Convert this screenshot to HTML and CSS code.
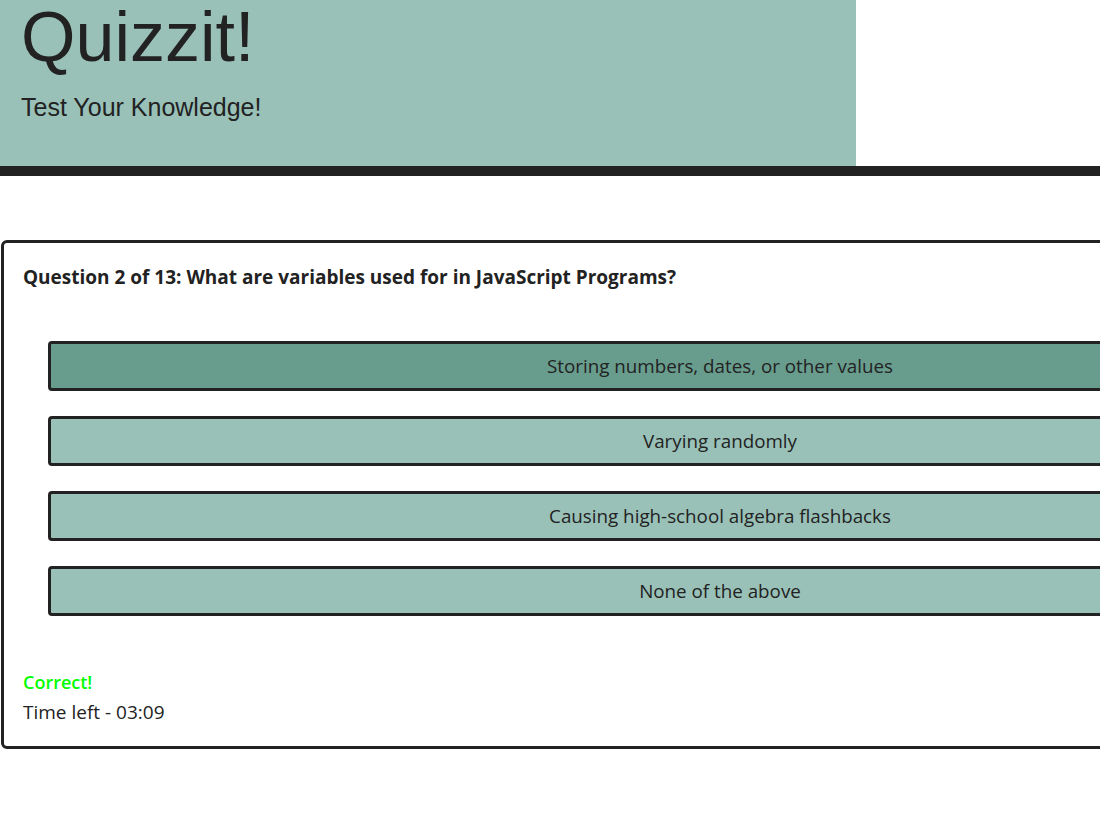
FILE: index.html
```html
<!DOCTYPE html>
<html lang="en">
  <head>
    <meta charset="UTF-8" />
    <meta name="viewport" content="width=device-width, initial-scale=1.0" />
    <title>Quizzit!</title>
    <link rel="stylesheet" href="styles.css">
  </head>
  <body>
    <header>
      <div class="banner">
        <h1>Quizzit!</h1>
        <p class="tagline">Test Your Knowledge!</p>
      </div>
    </header>

    <main>
      <section class="card">
        <h2 class="question">Question 2 of 13: What are variables used for in JavaScript Programs?</h2>
        <div class="answers">
          <button class="answer picked">Storing numbers, dates, or other values</button>
          <button class="answer">Varying randomly</button>
          <button class="answer">Causing high-school algebra flashbacks</button>
          <button class="answer">None of the above</button>
        </div>
        <p class="result">Correct!</p>
        <p class="timer">Time left - 03:09</p>
      </section>
    </main>
  </body>
</html>
```

FILE: styles.css
```css
* {
  box-sizing: border-box;
}
html,
body {
  overflow: hidden;
}
body {
  margin: 0;
  width: 1440px;
  font-family: "Open Sans", sans-serif;
  color: #222222;
  background: #ffffff;
}

header {
  border-bottom: 10px solid #222222;
}
.banner {
  width: 856px;
  height: 166px;
  background: #99c1b8;
  padding: 0 21px;
  font-family: "Liberation Sans", Arial, sans-serif;
}
.banner h1 {
  margin: 0;
  font-size: 70px;
  font-weight: normal;
  line-height: 74px;
}
.tagline {
  margin: 19px 0 0;
  font-size: 25px;
}

main {
  padding-top: 64px;
}
.card {
  margin-left: 1px;
  width: 1438px;
  border: 3px solid #222222;
  border-radius: 6px;
  padding: 20px 19px 19px;
}
.question {
  margin: 0;
  font-size: 19px;
  font-weight: bold;
  line-height: 28px;
}
.answers {
  display: flex;
  flex-direction: column;
  gap: 25px;
  margin: 50px 0 0 25px;
  width: 1344px;
}
.answer {
  height: 50px;
  border: 3px solid #222222;
  border-radius: 4px;
  background: #99c1b8;
  color: #222222;
  font-family: "Open Sans", sans-serif;
  font-size: 18.8px;
}
.answer.picked {
  background: #689d8e;
}
.result {
  margin: 51px 0 0;
  font-size: 18px;
  font-weight: 600;
  line-height: 30px;
  color: #00ff00;
}
.timer {
  margin: 0;
  font-size: 19px;
  line-height: 30px;
}
```
